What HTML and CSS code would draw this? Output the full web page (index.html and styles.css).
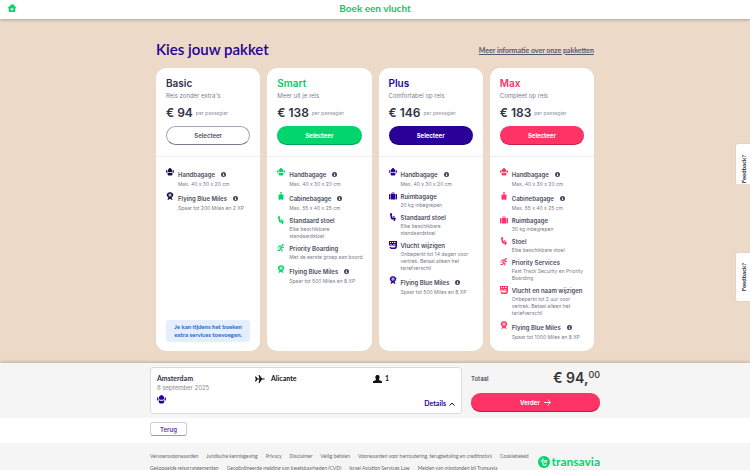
FILE: index.html
```html
<!DOCTYPE html>
<html lang="nl">
<head>
<meta charset="utf-8">
<meta name="viewport" content="width=device-width, initial-scale=1">
<title>Boek een vlucht</title>
<link rel="stylesheet" href="styles.css">
</head>
<body>
<svg class="sprite" aria-hidden="true">
  <symbol id="bag" viewBox="0 0 16 16"><path d="M6 1.500C6 .5 7 0 8 0s2 .5 2 1.500c1.500.5 2.500 1.800 2.800 3.500l.2 2-2.500 1.500h-5L3 7l.2-2C3.500 3.300 4.500 2 6 1.500zM2 3L1.500 6 3 8 1.500 10C.5 9.500 0 8.500 0 7s.5-3 2-4zM14 3l.5 3L13 8l1.500 2c1-.5 1.500-1.500 1.500-3s-.5-3-2-4zM3.500 9l2 1h5l2-1 .5 3c-.5 2-1.500 3-3 3H6c-1.500 0-2.500-1-3-3z"/></symbol>
  <symbol id="cabin" viewBox="0 0 16 16"><path d="M6 0h4v5h1.500c.8 0 1.500.6 1.500 1.500v7c0 .8-.5 1.500-1.500 1.500V16h-1.500v-1h-4v1H4.500v-1C3.500 15 3 14.300 3 13.500v-7C3 5.600 3.700 5 4.500 5H6zm1 1v4h2V1z"/></symbol>
  <symbol id="suitcase" viewBox="0 0 16 16"><path d="M5 4V2.500C5 1.500 5.500 1 6.500 1h3c1 0 1.500.5 1.500 1.500V4h1v11H4V4zm1.500 0h3V2.500h-3zM3 4v11H1.500C.5 15 0 14.500 0 13.500v-8C0 4.500.5 4 1.500 4zM13 4h1.500c1 0 1.500.5 1.500 1.500v8c0 1-.5 1.500-1.500 1.500H13z"/></symbol>
  <symbol id="seat" viewBox="0 0 16 16"><path d="M2 1l3-1 1.500 3-1 2L7 9h5.500l1 1.500L12 16H9.500v-3H6L4 11.500 2.500 5zM7.500 6H11v1.500H8z"/></symbol>
  <symbol id="runner" viewBox="0 0 16 16"><circle cx="11.500" cy="2" r="2"/><path d="M3 6l3-2.500 3 1L11 7h3M9 5L6.500 9l3.500 2-.5 4M6.500 10L5 13H1M1 8h2.500" fill="none" stroke="currentColor" stroke-width="2.200"/></symbol>
  <symbol id="ticket" viewBox="0 0 16 16"><path fill-rule="evenodd" d="M0 0h16v12l-3 4H4l-3-3 1-2 3 2h6l2-2V9H0zm2 2v2h2V2zm4 0v2h2V2zm4 0v2h3V2zM2 6v1h4V6zm6 0v1h5V6z"/></symbol>
  <symbol id="medal" viewBox="0 0 16 16"><path fill-rule="evenodd" d="M8 0l2 1 2.500.3.8 2.200L15 5.500 13.700 8l-.8 2-1.700.6L13 16l-3-1-2-2-2 2-3 1 1.800-5.400L3.100 10l-.8-2L1 5.500l1.700-2 .8-2.200L6 1zm0 3a3 3 0 1 0 0 6 3 3 0 0 0 0-6z"/><circle cx="8" cy="6" r="1.300"/></symbol>
  <symbol id="info" viewBox="0 0 16 16"><circle cx="8" cy="8" r="8"/><path d="M7 3h2.500v2.500H7zM6 7h3.500v4.500H11V13H6v-1.500h1V8.500H6z" fill="#fff"/></symbol>
</svg>

<header class="topbar">
  <a class="home" href="#" aria-label="Home"><svg viewBox="0 0 16 16"><path fill-rule="evenodd" d="M8 0l3 2.300V1h2v3l3 3v1.500h-1.500V15c0 .6-.4 1-1 1h-11c-.6 0-1-.4-1-1V8.500H0V7zM5.500 8v4.500h5V8L8 9.500z"/></svg></a>
  <p class="topbar-title">Boek een vlucht</p>
</header>

<main class="packages">
  <div class="packages-inner">
    <div class="heading">
      <h1>Kies jouw pakket</h1>
      <a class="more" href="#">Meer informatie over onze pakketten</a>
    </div>
    <div class="cards">
      <article class="card basic">
        <div class="card-head">
          <h2>Basic</h2>
          <p class="tagline">Reis zonder extra's</p>
          <p class="price"><strong>€ 94</strong> <span>per passagier</span></p>
          <button class="select" type="button">Selecteer</button>
        </div>
        <ul class="features">
          <li class="has-info"><svg><use href="#bag"/></svg><h3>Handbagage <svg class="info"><use href="#info"/></svg></h3><p>Max. 40 x 30 x 20 cm</p></li>
          <li class="has-info"><svg><use href="#medal"/></svg><h3>Flying Blue Miles <svg class="info"><use href="#info"/></svg></h3><p>Spaar tot 200 Miles en 2 XP</p></li>
        </ul>
        <p class="notice">Je kan tijdens het boeken extra services toevoegen.</p>
      </article>

      <article class="card smart">
        <div class="card-head">
          <h2>Smart</h2>
          <p class="tagline">Meer uit je reis</p>
          <p class="price"><strong>€ 138</strong> <span>per passagier</span></p>
          <button class="select" type="button">Selecteer</button>
        </div>
        <ul class="features">
          <li class="has-info"><svg><use href="#bag"/></svg><h3>Handbagage <svg class="info"><use href="#info"/></svg></h3><p>Max. 40 x 30 x 20 cm</p></li>
          <li class="has-info"><svg><use href="#cabin"/></svg><h3>Cabinebagage <svg class="info"><use href="#info"/></svg></h3><p>Max. 55 x 40 x 25 cm</p></li>
          <li><svg><use href="#seat"/></svg><h3>Standaard stoel</h3><p>Elke beschikbare<br>standaardstoel</p></li>
          <li><svg><use href="#runner"/></svg><h3>Priority Boarding</h3><p>Met de eerste groep aan boord</p></li>
          <li class="has-info"><svg><use href="#medal"/></svg><h3>Flying Blue Miles <svg class="info"><use href="#info"/></svg></h3><p>Spaar tot 500 Miles en 8 XP</p></li>
        </ul>
      </article>

      <article class="card plus">
        <div class="card-head">
          <h2>Plus</h2>
          <p class="tagline">Comfortabel op reis</p>
          <p class="price"><strong>€ 146</strong> <span>per passagier</span></p>
          <button class="select" type="button">Selecteer</button>
        </div>
        <ul class="features">
          <li class="has-info"><svg><use href="#bag"/></svg><h3>Handbagage <svg class="info"><use href="#info"/></svg></h3><p>Max. 40 x 30 x 20 cm</p></li>
          <li><svg><use href="#suitcase"/></svg><h3>Ruimbagage</h3><p>20 kg inbegrepen</p></li>
          <li><svg><use href="#seat"/></svg><h3>Standaard stoel</h3><p>Elke beschikbare<br>standaardstoel</p></li>
          <li><svg><use href="#ticket"/></svg><h3>Vlucht wijzigen</h3><p>Onbeperkt tot 14 dagen voor<br>vertrek. Betaal alleen het<br>tariefverschil</p></li>
          <li class="has-info"><svg><use href="#medal"/></svg><h3>Flying Blue Miles <svg class="info"><use href="#info"/></svg></h3><p>Spaar tot 500 Miles en 8 XP</p></li>
        </ul>
      </article>

      <article class="card max">
        <div class="card-head">
          <h2>Max</h2>
          <p class="tagline">Compleet op reis</p>
          <p class="price"><strong>€ 183</strong> <span>per passagier</span></p>
          <button class="select" type="button">Selecteer</button>
        </div>
        <ul class="features">
          <li class="has-info"><svg><use href="#bag"/></svg><h3>Handbagage <svg class="info"><use href="#info"/></svg></h3><p>Max. 40 x 30 x 20 cm</p></li>
          <li class="has-info"><svg><use href="#cabin"/></svg><h3>Cabinebagage <svg class="info"><use href="#info"/></svg></h3><p>Max. 55 x 40 x 25 cm</p></li>
          <li><svg><use href="#suitcase"/></svg><h3>Ruimbagage</h3><p>30 kg inbegrepen</p></li>
          <li><svg><use href="#seat"/></svg><h3>Stoel</h3><p>Elke beschikbare stoel</p></li>
          <li><svg><use href="#runner"/></svg><h3>Priority Services</h3><p>Fast Track Security en Priority<br>Boarding</p></li>
          <li><svg><use href="#ticket"/></svg><h3>Vlucht en naam wijzigen</h3><p>Onbeperkt tot 2 uur voor<br>vertrek. Betaal alleen het<br>tariefverschil</p></li>
          <li class="has-info"><svg><use href="#medal"/></svg><h3>Flying Blue Miles <svg class="info"><use href="#info"/></svg></h3><p>Spaar tot 1000 Miles en 8 XP</p></li>
        </ul>
      </article>
    </div>
  </div>
</main>

<section class="summary">
  <div class="summary-inner">
    <div class="trip">
      <div class="trip-row">
        <div class="origin"><strong>Amsterdam</strong><span>8 september 2025</span></div>
        <div class="destination">
          <svg viewBox="0 0 20 16"><path d="M0 3h2l3 4h4L7 0h2l5 7h4c2.700 0 2.700 2 0 2h-4l-5 7H7l2-7H5l-3 4H0l1.500-5z"/></svg>
          <strong>Alicante</strong>
        </div>
        <div class="pax">
          <svg viewBox="0 0 18 16"><path d="M9 0c5 0 5 5 3 9v1l5 2c1 .5 1 1 1 4H0c0-3 0-3.500 1-4l5-2V9C4 5 4 0 9 0z"/></svg>
          <span>1</span>
        </div>
      </div>
      <div class="trip-foot">
        <svg class="trip-bag"><use href="#bag"/></svg>
        <button class="details" type="button">Details <svg viewBox="0 0 12 8"><path d="M1 7l5-5 5 5"/></svg></button>
      </div>
    </div>
    <div class="checkout">
      <div class="total"><span>Totaal</span><strong>€ 94,<sup>00</sup></strong></div>
      <button class="next" type="button">Verder <svg viewBox="0 0 16 16"><path d="M0 8h14M8 1l7 7-7 7"/></svg></button>
    </div>
  </div>
</section>

<div class="back-row"><button class="back" type="button">Terug</button></div>

<footer class="footer">
  <div class="footer-inner">
    <nav>
      <div class="links"><a href="#">Vervoersvoorwaarden</a><a href="#">Juridische kennisgeving</a><a href="#">Privacy</a><a href="#">Disclaimer</a><a href="#">Veilig betalen</a><a href="#">Voorwaarden voor herroutering, terugbetaling en creditnota's</a><a href="#">Cookiebeleid</a></div>
      <div class="links"><a href="#">Gekoppelde reisarrangementen</a><a href="#">Gecoördineerde melding van kwetsbaarheden (CVD)</a><a href="#">Israel Aviation Services Law</a><a href="#">Melden van misstanden bij Transavia</a></div>
    </nav>
    <a class="logo" href="#"><svg viewBox="0 0 22 22"><circle cx="11" cy="11" r="11"/><path d="M9 4v10c0 4 5 4 6 1M5 9h5M11 9h6M12 12h4"/></svg>transavia</a>
  </div>
</footer>

<button class="feedback feedback-top" type="button"><span>Feedback?</span></button>
<button class="feedback feedback-bottom" type="button"><span>Feedback?</span></button>
</body>
</html>
```
FILE: styles.css
```css
* { box-sizing: border-box; }

body {
  margin: 0;
  height: 100vh;
  overflow: hidden;
  background: #fff;
  color: #2d3348;
  font-family: Inter, "Open Sans", sans-serif;
  font-size: 6px;
  font-feature-settings: "calt" 0;
}

h1, h2, h3, p, ul { margin: 0; padding: 0; }
ul { list-style: none; }
button { font: inherit; color: inherit; cursor: pointer; padding: 0; }
a { color: inherit; text-decoration: none; }
svg { fill: currentColor; display: block; }
.sprite { position: absolute; width: 0; height: 0; }

.topbar {
  position: relative;
  display: grid;
  grid-template-columns: 1fr auto 1fr;
  align-items: center;
  height: 19px;
  padding: 0 8px 3px;
  background: #fff;
  box-shadow: 0 1px 3px rgba(0, 0, 0, .25);
}
.home { color: #00d66c; }
.home svg { width: 8px; height: 8px; }
.topbar-title {
  color: #1ac26a;
  font-family: Lato, sans-serif;
  font-size: 10px;
  font-weight: 700;
  line-height: 14px;
}

.packages { padding: 21px 16px 12px; background: #ecd9c8; }
.packages-inner { max-width: 438px; margin: 0 auto; }
.heading {
  display: flex;
  align-items: center;
  justify-content: space-between;
  height: 28px;
  padding-bottom: 9px;
}
h1 {
  color: #1f0096;
  font-family: Lato, sans-serif;
  font-size: 15px;
  font-weight: 600;
  line-height: 19px;
}
.more {
  color: #55596b;
  font-family: Lato, sans-serif;
  font-size: 7px;
  font-weight: 700;
  text-decoration: underline;
}

.cards {
  display: grid;
  grid-template-columns: repeat(4, 1fr);
  gap: 7px;
  min-height: 283px;
}
.card {
  display: flex;
  flex-direction: column;
  padding-bottom: 9px;
  border-radius: 10px;
  background: #fff;
}
.card-head { padding: 8px 10px 11px; border-bottom: 1px solid #ececf0; }
h2 { font-size: 10px; font-weight: 600; line-height: 15px; color: var(--accent); }
.tagline { color: #7c8090; line-height: 9px; }
.price { display: flex; align-items: center; gap: 3px; height: 26px; padding-bottom: 1px; }
.price strong { font-size: 12px; font-weight: 600; }
.price span { color: #8d909e; font-size: 5px; }
.select {
  display: block;
  width: 100%;
  height: 19px;
  border: 0;
  border-radius: 10px;
  background: var(--accent);
  box-shadow: inset 0 -1px rgba(0, 0, 0, .25);
  color: #fff;
  font-size: 6px;
  font-weight: 700;
}
.basic { --accent: #2d3348; --icon: #10123c; }
.smart { --accent: #00d66c; --icon: #00d66c; }
.plus { --accent: #2b0099; --icon: #2b0099; }
.max { --accent: #ff3366; --icon: #ff3366; }
.smart h2 { color: #10c766; }
.basic .select {
  border: 1px solid #a3a4b6;
  border-bottom-color: #77788f;
  background: #fff;
  box-shadow: none;
  color: #4b5064;
  font-weight: 600;
}

.features { flex: 1; display: flex; flex-direction: column; gap: 3px; padding: 10px 8px 0 10px; }
.features li { display: grid; grid-template-columns: 12px 1fr; align-content: start; }
.features li > svg { width: 8px; height: 8px; color: var(--icon); margin-top: 1px; }
.features h3 {
  display: flex;
  align-items: center;
  gap: 6px;
  height: 11px;
  font-size: 6px;
  font-weight: 600;
  color: #4a4f61;
  white-space: nowrap;
}
.features .has-info h3 { height: 14px; }
.features .info { width: 5px; height: 5px; color: #3f465b; }
.features p {
  grid-column: 2;
  color: #777b89;
  font-size: 5px;
  line-height: 7px;
  white-space: nowrap;
}
.notice {
  margin: 0 10px;
  padding: 3px 6px;
  border-radius: 3px;
  background: #e3efff;
  color: #2765bd;
  font-family: Lato, sans-serif;
  font-size: 6px;
  font-weight: 700;
  line-height: 8px;
  text-align: center;
}

.summary {
  position: relative;
  padding: 4px 16px 3px;
  background: #f5f5f5;
  box-shadow: 0 -1px 3px rgba(0, 0, 0, .2);
}
.summary-inner {
  display: grid;
  grid-template-columns: 312px 1fr;
  gap: 9px;
  max-width: 450px;
  margin: 0 auto;
}
.trip {
  height: 47px;
  padding: 6px 6px 4px;
  border: 1px solid #dcdce0;
  border-radius: 3px;
  background: #fff;
}
.trip-row { display: grid; grid-template-columns: 98px 118px 1fr; align-items: start; line-height: 9px; }
.trip-row strong, .pax span { font-family: Lato, sans-serif; font-size: 7px; font-weight: 700; }
.origin { display: flex; flex-direction: column; }
.origin span { color: #8a8a90; }
.destination, .pax { display: flex; align-items: center; gap: 6px; color: #111; }
.destination svg { width: 10px; height: 8px; }
.pax { gap: 3px; }
.pax svg { width: 9px; height: 8px; }
.trip-foot { display: flex; justify-content: space-between; align-items: flex-start; padding-top: 3px; color: #2b0099; }
.trip-bag { width: 9px; height: 9px; }
.details {
  display: flex;
  align-items: center;
  gap: 3px;
  margin-top: 4px;
  border: 0;
  background: none;
  font-family: Lato, sans-serif;
  font-size: 7px;
  font-weight: 700;
  line-height: 9px;
}
.details svg { width: 6px; height: 4px; fill: none; stroke: currentColor; stroke-width: 2; }
.total { display: flex; justify-content: space-between; align-items: center; height: 22px; }
.total span { font-size: 6px; font-weight: 500; }
.total strong { display: flex; color: #333; font-size: 14px; font-weight: 600; line-height: 20px; }
.total sup { font-size: 9px; font-weight: 500; line-height: 14px; }
.next {
  display: flex;
  align-items: center;
  justify-content: center;
  gap: 4px;
  width: 100%;
  height: 19px;
  margin-top: 4px;
  border: 0;
  border-radius: 10px;
  background: #ff3366;
  box-shadow: inset 0 -1px #c71548;
  color: #fff;
  font-weight: 700;
}
.next svg { width: 7px; height: 7px; fill: none; stroke: currentColor; stroke-width: 2; }

.back-row { max-width: 450px; margin: 0 auto; padding: 5px 0 7px; }
.back {
  display: block;
  width: 37px;
  height: 14px;
  border: 1px solid #cfcdd6;
  border-bottom-color: #9c9aa8;
  border-radius: 3px;
  background: #fff;
  color: #5b3bab;
  font-weight: 600;
}

.footer { padding: 9px 16px; background: #f5f5f5; }
.footer-inner { display: flex; justify-content: space-between; max-width: 450px; margin: 0 auto; }
.links {
  display: flex;
  gap: 8px;
  height: 12px;
  color: #68686e;
  font-family: Lato, sans-serif;
  font-size: 5px;
  line-height: 9px;
  white-space: nowrap;
}
.logo {
  display: flex;
  align-items: center;
  gap: 2px;
  height: 19px;
  color: #00d66c;
  font-family: Lato, sans-serif;
  font-size: 12px;
  font-weight: 700;
}
.logo svg { width: 12px; height: 12px; }
.logo path { fill: none; stroke: #fff; stroke-width: 2; }

.feedback {
  position: fixed;
  right: 0;
  display: flex;
  align-items: center;
  justify-content: center;
  width: 15px;
  height: 50px;
  border: 1px solid #e2d5ca;
  border-right: 0;
  border-radius: 3px 0 0 3px;
  background: #fff;
  font-family: Lato, sans-serif;
  font-size: 6px;
  font-weight: 700;
}
.feedback span { writing-mode: vertical-rl; transform: rotate(180deg); }
.feedback-top { top: 143px; height: 41px; align-items: flex-end; padding-bottom: 1px; border-bottom: 0; border-bottom-left-radius: 0; }
.feedback-bottom { top: 252px; }
```
